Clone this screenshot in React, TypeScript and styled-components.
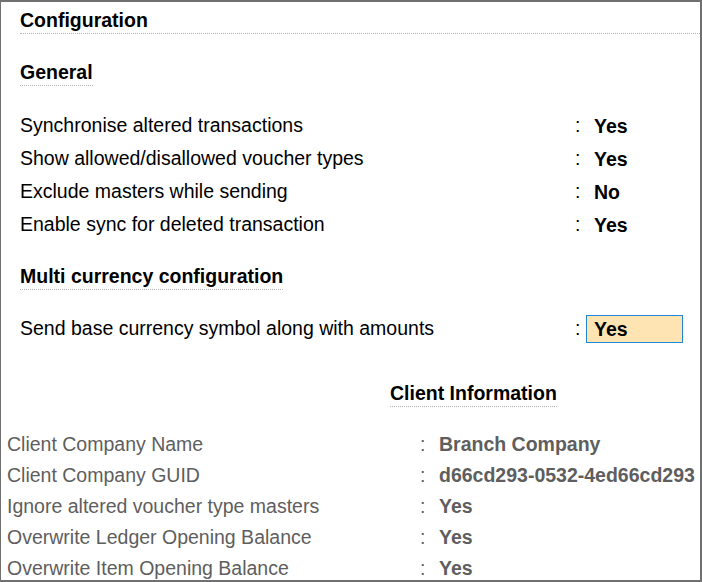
import React from "react";
import styled, { createGlobalStyle } from "styled-components";

const GlobalStyle = createGlobalStyle`
  html, body { margin: 0; padding: 0; background: #ffffff; }
  body { font-family: "Liberation Sans", Arial, sans-serif; }
`;

const Frame = styled.div`
  box-sizing: border-box;
  width: 702px;
  height: 582px;
  overflow: hidden;
  background: #ffffff;
  border-top: 2px solid #707070;
  border-left: 1px solid #707070;
  border-right: 2px solid #707070;
  border-bottom: 2px solid #707070;
  display: flex;
  flex-direction: column;
  font-family: "Liberation Sans", Arial, sans-serif;
  font-size: 19.5px;
  color: #000;
`;

const Main = styled.section`
  display: flex;
  flex-direction: column;
  padding: 7px 0 0 19px;
`;

const Heading = styled.div<{ $full?: boolean; $gap: number }>`
  align-self: ${(p) => (p.$full ? "stretch" : "flex-start")};
  margin-top: ${(p) => p.$gap}px;
  font-weight: bold;
  line-height: 22px;
  height: 22px;
  padding-bottom: 2px;
  border-bottom: 1px dotted #b4b4b4;
  white-space: nowrap;
`;

const Rows = styled.div<{ $gap: number }>`
  display: flex;
  flex-direction: column;
  margin-top: ${(p) => p.$gap}px;
`;

const Row = styled.div`
  display: flex;
  align-items: center;
  height: 33px;
  line-height: 33px;
  white-space: nowrap;
`;

const Label = styled.span`
  width: 555px;
`;

const Colon = styled.span<{ $w: number }>`
  width: ${(p) => p.$w}px;
`;

const Value = styled.span<{ $active?: boolean }>`
  box-sizing: border-box;
  font-weight: bold;
  padding-left: 7px;
  border: 1px solid ${(p) => (p.$active ? "#1f86d6" : "transparent")};
  background: ${(p) => (p.$active ? "#fde4b2" : "transparent")};
  width: 97px;
  height: 28px;
  line-height: 26px;
`;

const Client = styled.section`
  display: flex;
  flex-direction: column;
  padding-left: 6px;
`;

const ClientHeading = styled(Heading)`
  margin-left: 383px;
`;

const ClientRow = styled.div`
  display: flex;
  align-items: center;
  height: 31px;
  line-height: 31px;
  white-space: nowrap;
  color: #5e5e5e;
`;

const ClientLabel = styled.span`
  width: 413px;
`;

const ClientValue = styled.span`
  font-weight: bold;
`;

const general: [string, string][] = [
  ["Synchronise altered transactions", "Yes"],
  ["Show allowed/disallowed voucher types", "Yes"],
  ["Exclude masters while sending", "No"],
  ["Enable sync for deleted transaction", "Yes"],
];

const client: [string, string][] = [
  ["Client Company Name", "Branch Company"],
  ["Client Company GUID", "d66cd293-0532-4ed66cd293"],
  ["Ignore altered voucher type masters", "Yes"],
  ["Overwrite Ledger Opening Balance", "Yes"],
  ["Overwrite Item Opening Balance", "Yes"],
];

export default function App() {
  return (
    <>
      <GlobalStyle />
      <Frame>
        <Main>
          <Heading $full $gap={0}>Configuration</Heading>
          <Heading $gap={27}>General</Heading>
          <Rows $gap={23}>
            {general.map(([l, v]) => (
              <Row key={l}>
                <Label>{l}</Label>
                <Colon $w={11}>:</Colon>
                <Value>{v}</Value>
              </Row>
            ))}
          </Rows>
          <Heading $gap={24}>Multi currency configuration</Heading>
          <Rows $gap={22}>
            <Row>
              <Label>Send base currency symbol along with amounts</Label>
              <Colon $w={11}>:</Colon>
              <Value $active>Yes</Value>
            </Row>
          </Rows>
        </Main>
        <Client>
          <ClientHeading $gap={37}>Client Information</ClientHeading>
          <Rows $gap={22}>
            {client.map(([l, v]) => (
              <ClientRow key={l}>
                <ClientLabel>{l}</ClientLabel>
                <Colon $w={19}>:</Colon>
                <ClientValue>{v}</ClientValue>
              </ClientRow>
            ))}
          </Rows>
        </Client>
      </Frame>
    </>
  );
}
